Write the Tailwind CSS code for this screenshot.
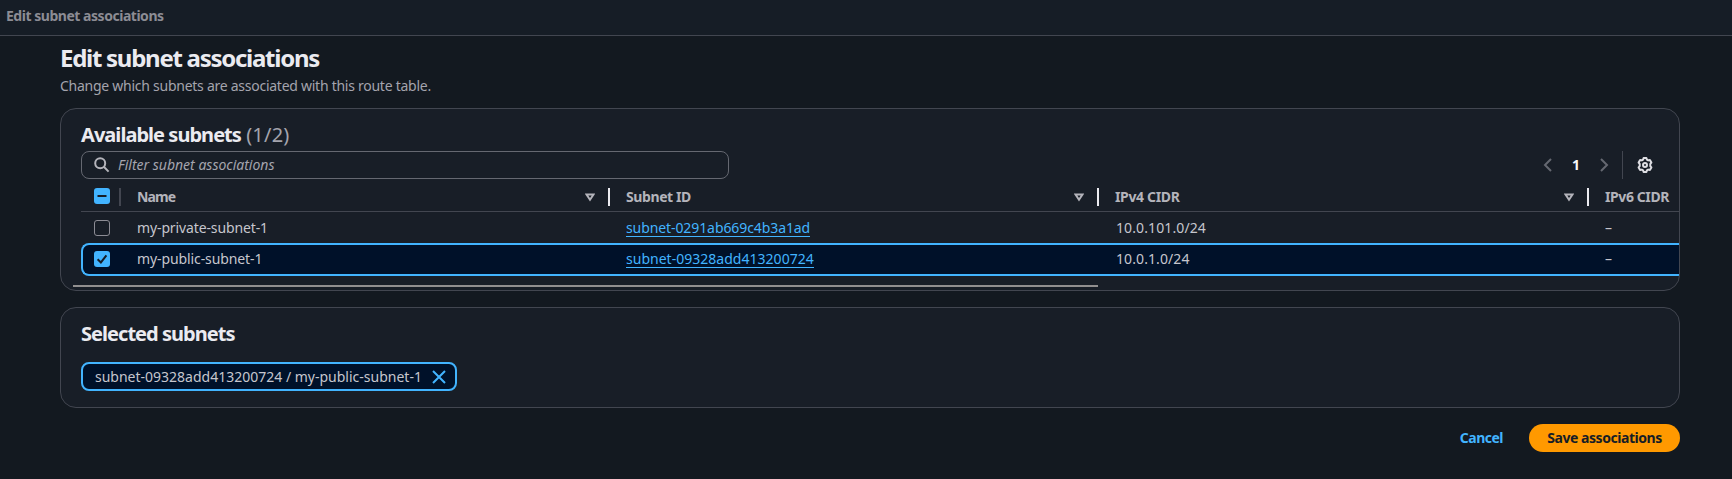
<!DOCTYPE html>
<html lang="en">
<head>
<meta charset="utf-8">
<title>Edit subnet associations</title>
<script src="https://cdn.jsdelivr.net/npm/@tailwindcss/browser@4"></script>
</head>
<body class="h-[479px] overflow-hidden bg-[#131920] font-['Noto_Sans','Open_Sans',sans-serif] text-sm leading-5 text-[#c6c6cd] whitespace-nowrap">
  <header class="h-9 border-b border-[#424650] bg-[#161d26] pl-[6px] pt-[6px]">
    <span class="font-bold tracking-[-0.47px] text-[#8c8c94]">Edit subnet associations</span>
  </header>

  <main class="ml-[60px] w-[1620px] pt-[7px]">
    <h1 class="text-2xl leading-[30px] font-bold tracking-[-1.27px] text-[#ebebf0]">Edit subnet associations</h1>
    <p class="mt-[3px] tracking-[-0.26px] text-[#a4a4ad]">Change which subnets are associated with this route table.</p>

    <section class="mt-3 h-[183px] overflow-hidden rounded-2xl border border-[#424650] bg-[#181e27] pt-[14px]">
      <h2 class="pl-5 text-xl leading-6 font-bold tracking-[-0.96px] text-[#ebebf0]">Available subnets <span class="ml-px font-normal tracking-[0.2px] text-[#a4a4ad]">(1/2)</span></h2>

      <div class="mt-1 flex h-7 items-center pl-5">
        <div class="flex h-7 w-[648px] items-center rounded-lg border border-[#656871] pl-3">
          <svg class="size-4 text-[#b4b4bb]" viewBox="0 0 16 16" fill="none" stroke="currentColor" stroke-width="2"><circle cx="6.2" cy="6.2" r="5"/><path d="M9.8 9.8 14.6 14.6"/></svg>
          <span class="ml-2 italic text-[#a4a4ad]">Filter subnet associations</span>
        </div>
        <svg class="ml-[812px] size-4 text-[#656871]" viewBox="0 0 16 16" fill="none" stroke="currentColor" stroke-width="2"><path d="M10 2 4 8l6 6"/></svg>
        <span class="ml-[11px] w-4 text-center font-bold text-[#f9f9fa]">1</span>
        <svg class="ml-3 size-4 text-[#656871]" viewBox="0 0 16 16" fill="none" stroke="currentColor" stroke-width="2"><path d="M5 2l6 6-6 6"/></svg>
        <span class="ml-[10px] h-7 w-px bg-[#424650]"></span>
        <svg class="ml-[14px] size-4 text-[#dedee3]" viewBox="0 0 16 16" fill="none" stroke="currentColor" stroke-width="2" stroke-linejoin="round"><path d="M6.1 2.6 6.6 1h2.8l.5 1.6 1.3.8 1.7-.4L14.4 5.5 13.3 6.8v2.4L14.4 10.5 12.9 13l-1.7-.4-1.3.8L9.4 15H6.6l-.5-1.6-1.3-.8L3.1 13 1.6 10.5 2.7 9.2V6.8L1.6 5.5 3.1 3l1.7.4z"/><circle cx="8" cy="8" r="2"/></svg>
      </div>

      <div class="ml-5">
        <div class="flex h-[33px] border-b border-[#424650] pt-[9px] font-bold text-[#b4b4bb]">
          <div class="flex w-10 justify-between pl-[13px]">
            <svg class="size-4" viewBox="0 0 16 16"><rect width="16" height="16" rx="3" fill="#42b4ff"/><path d="M3.5 8h9" stroke="#161d26" stroke-width="2"/></svg>
            <span class="h-[18px] w-[2px] bg-[#424650]"></span>
          </div>
          <div class="flex h-[18px] w-[489px] items-center justify-between pl-4">
            <span class="tracking-[-0.9px]">Name</span>
            <div class="flex items-center gap-[13px]"><svg class="h-[9px] w-[10px]" viewBox="0 0 10 9" fill="none" stroke="currentColor" stroke-width="2"><path d="M1.5 1.5h7L5 6.8z"/></svg><span class="h-[18px] w-[2px] bg-[#ebebf0]"></span></div>
          </div>
          <div class="flex h-[18px] w-[489px] items-center justify-between pl-4">
            <span class="tracking-[-0.4px]">Subnet ID</span>
            <div class="flex items-center gap-[13px]"><svg class="h-[9px] w-[10px]" viewBox="0 0 10 9" fill="none" stroke="currentColor" stroke-width="2"><path d="M1.5 1.5h7L5 6.8z"/></svg><span class="h-[18px] w-[2px] bg-[#ebebf0]"></span></div>
          </div>
          <div class="flex h-[18px] w-[490px] items-center justify-between pl-4">
            <span class="tracking-[-0.35px]">IPv4 CIDR</span>
            <div class="flex items-center gap-[13px]"><svg class="h-[9px] w-[10px]" viewBox="0 0 10 9" fill="none" stroke="currentColor" stroke-width="2"><path d="M1.5 1.5h7L5 6.8z"/></svg><span class="h-[18px] w-[2px] bg-[#ebebf0]"></span></div>
          </div>
          <div class="flex h-[18px] items-center pl-4"><span class="tracking-[-0.4px]">IPv6 CIDR</span></div>
        </div>

        <div class="flex h-[31px] items-start pt-[6px]">
          <div class="w-14 pl-[13px] pt-[2px]"><div class="size-4 rounded-[3px] border border-[#8c8c94]"></div></div>
          <div class="w-[489px] tracking-[-0.12px]">my-private-subnet-1</div>
          <div class="w-[490px]"><a class="block h-[19px] w-fit border-b border-[#42b4ff] tracking-[-0.09px] text-[#42b4ff]">subnet-0291ab669c4b3a1ad</a></div>
          <div class="w-[489px] tracking-[0.11px]">10.0.101.0/24</div>
          <div>–</div>
        </div>

        <div class="flex h-[33px] items-start rounded-l-lg border-y-2 border-l-2 border-[#42b4ff] bg-[#001129] pt-1">
          <div class="w-[54px] pl-[11px] pt-[2px]">
            <svg class="size-4" viewBox="0 0 16 16"><rect width="16" height="16" rx="3" fill="#42b4ff"/><path d="M3.6 8.2 6.9 11.4 12.4 4.4" fill="none" stroke="#161d26" stroke-width="2"/></svg>
          </div>
          <div class="w-[489px] tracking-[-0.1px]">my-public-subnet-1</div>
          <div class="w-[490px]"><a class="block h-[19px] w-fit border-b border-[#42b4ff] tracking-[0.02px] text-[#42b4ff]">subnet-09328add413200724</a></div>
          <div class="w-[489px] tracking-[0.09px]">10.0.1.0/24</div>
          <div>–</div>
        </div>
      </div>
      <div class="mt-[9px] ml-3 h-[2px] w-[1025px] bg-[#918f8f]"></div>
    </section>

    <section class="mt-4 h-[101px] rounded-2xl border border-[#424650] bg-[#181e27] pl-5 pt-[14px]">
      <h2 class="text-xl leading-6 font-bold tracking-[-0.96px] text-[#ebebf0]">Selected subnets</h2>
      <div class="mt-4 flex h-[29px] w-[376px] items-center rounded-lg border-2 border-[#42b4ff] bg-[#001129] pl-3">
        <span>subnet-09328add413200724 / my-public-subnet-1</span>
        <svg class="ml-[9px] size-4 text-[#42b4ff]" viewBox="0 0 16 16" fill="none" stroke="currentColor" stroke-width="2"><path d="M2 2l12 12M14 2 2 14"/></svg>
      </div>
    </section>

    <footer class="mt-4 flex items-center justify-end font-bold">
      <span class="mr-[26px] tracking-[-0.5px] text-[#42b4ff]">Cancel</span>
      <button class="h-7 w-[151px] rounded-full bg-[#ff9900] tracking-[-0.45px] text-[#161d26]">Save associations</button>
    </footer>
  </main>
</body>
</html>
